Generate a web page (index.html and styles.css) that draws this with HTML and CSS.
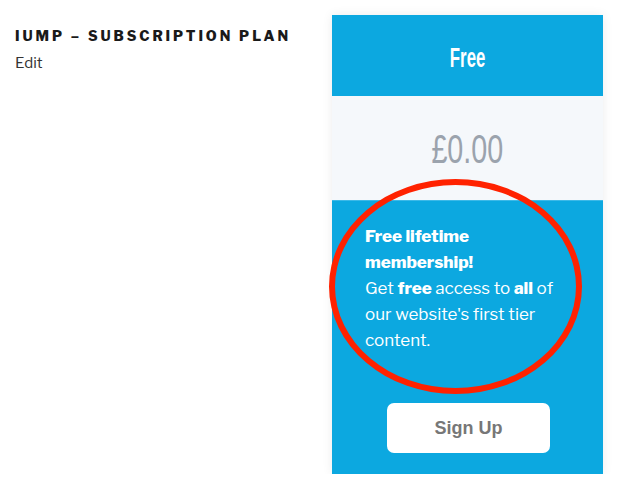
FILE: index.html
```html
<!DOCTYPE html>
<html lang="en">
<head>
    <meta charset="UTF-8">
    <meta name="viewport" content="width=device-width, initial-scale=1.0">
    <title>IUMP – Subscription Plan</title>
    <link rel="stylesheet" href="styles.css">
</head>
<body>
    <div class="page">
        <div class="entry">
            <h1 class="entry-title">IUMP – Subscription Plan</h1>
            <a class="edit-link" href="#">Edit</a>
        </div>

        <div class="plan">
            <div class="plan-head"><span class="narrow head-label">Free</span></div>
            <div class="plan-price"><span class="narrow price-label">£0.00</span></div>
            <div class="plan-body">
                <p class="plan-text"><strong>Free lifetime membership!</strong><br>
                Get <strong>free</strong> access to <strong>all</strong> of our website's first tier content.</p>
                <a class="signup" href="#">Sign Up</a>
            </div>
            <div class="marker"></div>
        </div>
    </div>
</body>
</html>
```

FILE: styles.css
```css
body { margin: 0; background: #fff; font-family: "Libre Franklin", Inter, "Liberation Sans", sans-serif; color: #222; }
.page { display: flex; align-items: flex-start; padding-top: 15px; }
.entry { width: 317px; padding-left: 15px; padding-top: 12px; }
.entry-title { margin: 0; font-size: 14px; font-weight: 800; letter-spacing: 2.95px; text-transform: uppercase; color: #1a1a1a; line-height: 18px; }
.edit-link { display: inline-block; margin-top: 9px; font-size: 15px; color: #333; text-decoration: none; }

.plan { position: relative; width: 271px; box-shadow: 0 0 10px rgba(0, 0, 0, 0.08); }
.narrow { display: inline-block; font-family: "Liberation Sans", Arial, sans-serif; }
.plan-head { background: #0ca8e0; color: #fff; height: 81px; line-height: 86px; text-align: center; }
.head-label { font-size: 28px; font-weight: bold; transform: scaleX(0.6); }
.plan-price { background: #f5f8fb; height: 104px; line-height: 106px; text-align: center; color: #9ba3ad; }
.price-label { font-size: 41px; transform: scaleX(0.7); }
.plan-body { background: #0ca8e0; border-top: 1px solid #3cb9e8; padding: 22px 33px 21px; text-align: center; }
.plan-text { margin: 0 0 50px; text-align: left; color: #fff; font-size: 17px; line-height: 26px; }
.plan-text strong { font-weight: 800; }
.signup { display: block; margin: 0 20px 0 22px; height: 50px; line-height: 50px; background: #fff; border-radius: 7px; color: #777; font-family: "Liberation Sans", Arial, sans-serif; font-weight: bold; font-size: 18px; text-decoration: none; }

.marker { position: absolute; left: -3px; top: 164px; width: 241px; height: 203px; border: 6px solid #ff2200; border-radius: 50%; }
```
